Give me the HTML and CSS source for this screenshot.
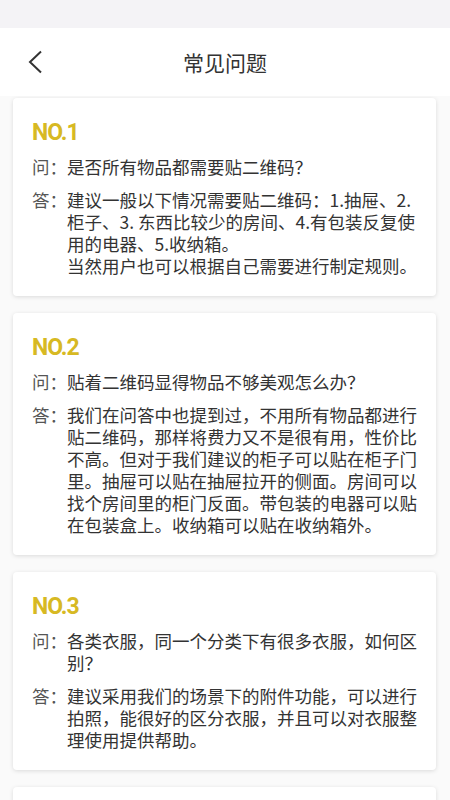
FILE: index.html
```html
<!DOCTYPE html>
<html lang="zh-CN">
<head>
<meta charset="utf-8">
<title>常见问题</title>
<link rel="stylesheet" href="styles.css">
</head>
<body>
<div class="status"></div>
<header class="header">
  <span class="back">
    <svg width="16" height="24" viewBox="0 0 16 24"><path d="M14 1.5 L3 12 L14 22.5" fill="none" stroke="#333" stroke-width="2"/></svg>
  </span>
  <h1 class="title">常见问题</h1>
</header>
<main class="list">
  <section class="card">
    <div class="no">NO.1</div>
    <div class="row q"><span class="label">问：</span><p class="text">是否所有物品都需要贴二维码？</p></div>
    <div class="row a"><span class="label">答：</span><div class="text"><p class="para">建议一般以下情况需要贴二维码：1.抽屉、2.柜子、3. 东西比较少的房间、4.有包装反复使用的电器、5.收纳箱。</p><p class="para">当然用户也可以根据自己需要进行制定规则。</p></div></div>
  </section>
  <section class="card">
    <div class="no">NO.2</div>
    <div class="row q"><span class="label">问：</span><p class="text">贴着二维码显得物品不够美观怎么办？</p></div>
    <div class="row a"><span class="label">答：</span><p class="text">我们在问答中也提到过，不用所有物品都进行贴二维码，那样将费力又不是很有用，性价比不高。但对于我们建议的柜子可以贴在柜子门里。抽屉可以贴在抽屉拉开的侧面。房间可以找个房间里的柜门反面。带包装的电器可以贴在包装盒上。收纳箱可以贴在收纳箱外。</p></div>
  </section>
  <section class="card">
    <div class="no">NO.3</div>
    <div class="row q"><span class="label">问：</span><p class="text">各类衣服，同一个分类下有很多衣服，如何区别？</p></div>
    <div class="row a"><span class="label">答：</span><p class="text">建议采用我们的场景下的附件功能，可以进行拍照，能很好的区分衣服，并且可以对衣服整理使用提供帮助。</p></div>
  </section>
  <section class="card card-empty"></section>
</main>
</body>
</html>
```
FILE: styles.css
```css
* { box-sizing: border-box; }
html, body { margin: 0; padding: 0; }
body {
  background: #fafafa;
  font-family: "Noto Sans CJK SC", "Noto Sans", sans-serif;
  color: #333;
  width: 450px;
  height: 800px;
  overflow: hidden;
}
.status {
  height: 28px;
  background: #f4f3f6;
}
.header {
  height: 68px;
  background: #fff;
  display: flex;
  align-items: center;
  justify-content: center;
  position: relative;
}
.back {
  position: absolute;
  left: 27px;
  top: 22px;
  width: 16px;
  height: 24px;
  display: flex;
}
.title {
  margin: 0;
  font-size: 21px;
  font-weight: 400;
  color: #333;
  line-height: 28px;
}
.list {
  padding: 2px 14px 0 13px;
  display: flex;
  flex-direction: column;
  gap: 17px;
}
.card {
  background: #fff;
  border-radius: 4px;
  box-shadow: 0 1px 4px rgba(0, 0, 0, 0.13);
  padding: 20px 16px 19px 19px;
}
.card-empty {
  min-height: 120px;
}
.no {
  font-family: Roboto, "Liberation Sans", sans-serif;
  font-weight: 700;
  font-size: 23px;
  letter-spacing: -1px;
  line-height: 30px;
  color: #d7b923;
}
.row {
  display: flex;
  font-size: 17.5px;
  line-height: 22px;
}
.q { margin-top: 8px; }
.a { margin-top: 11px; }
.label {
  flex: none;
  width: 35px;
  color: #555;
}
.text {
  margin: 0;
  flex: 1;
  color: #333;
}
.para {
  margin: 0;
}
```
